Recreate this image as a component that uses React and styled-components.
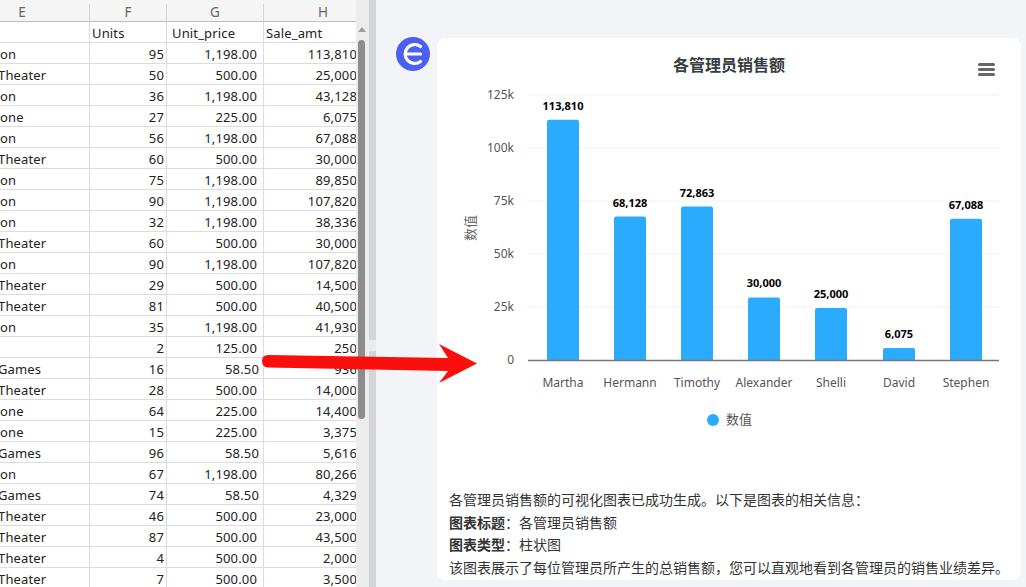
import React from 'react';
import styled, { createGlobalStyle } from 'styled-components';

const GlobalStyle = createGlobalStyle`
  html, body {
    margin: 0;
    padding: 0;
    background: #f3f4f8;
  }
`;

const Page = styled.div`
  position: relative;
  display: flex;
  width: 1026px;
  height: 587px;
  overflow: hidden;
  font-family: 'Noto Sans', 'Noto Sans CJK SC', sans-serif;
`;

const SheetPane = styled.div`
  display: flex;
  flex: 0 0 369px;
  background: #fff;
`;

const Sheet = styled.div`
  flex: 0 0 356px;
  overflow: hidden;
`;

const Row = styled.div`
  display: grid;
  grid-template-columns: 89px 77px 97px 95px;
  height: ${(p) => (p.$head ? 22 : 21)}px;
  box-sizing: border-box;
  border-bottom: 1px solid ${(p) => (p.$head ? '#bdbdbd' : '#dcdcdc')};
  background: ${(p) => (p.$head ? '#f5f5f5' : '#fff')};
  padding-top: ${(p) => (p.$head ? '4px' : '0')};
`;

const HeadCell = styled.div`
  box-sizing: border-box;
  border-left: ${(p) => (p.$first ? 'none' : '1px solid #d4d4d4')};
  padding: 0 ${(p) => p.$right || 0}px 0 ${(p) => p.$left || 0}px;
  color: #666;
  font-size: 13.5px;
  line-height: 17px;
  text-align: center;
`;

const Cell = styled.div`
  box-sizing: border-box;
  border-left: ${(p) => (p.$first ? 'none' : '1px solid #dcdcdc')};
  padding: 0 ${(p) => p.$pad ?? 2}px 0 ${(p) => (p.$first ? 0 : p.$lead || 2)}px;
  margin-left: ${(p) => (p.$first ? p.$shift || 0 : 0)}px;
  overflow: hidden;
  white-space: nowrap;
  color: #222;
  font-size: 13px;
  line-height: 23px;
  letter-spacing: 0.15px;
  text-align: ${(p) => (p.$num ? 'right' : 'left')};
`;

const Scrollbar = styled.div`
  position: relative;
  flex: 0 0 13px;
  background: #ececec;
`;

const ScrollArrow = styled.div`
  position: absolute;
  top: 27px;
  left: 2px;
  border-left: 4px solid transparent;
  border-right: 4px solid transparent;
  border-bottom: 5px solid #9a9a9a;
`;

const ScrollThumb = styled.div`
  position: absolute;
  top: 40px;
  left: 2px;
  width: 7px;
  height: 379px;
  border-radius: 4px;
  background: #8d8d8d;
`;

const Divider = styled.div`
  position: relative;
  flex: 0 0 7px;
  background: #d2d5da;
`;

const Grip = styled.div`
  position: absolute;
  top: 340px;
  left: 0;
  width: 7px;
  height: 11px;
  background: #e9ebee;
`;

const ChatPane = styled.div`
  display: flex;
  flex: 1;
  align-items: flex-start;
  gap: 7px;
  padding: 37px 5px 0 20px;
`;

const Avatar = styled.svg`
  flex: 0 0 34px;
  width: 34px;
  height: 34px;
`;

const Card = styled.div`
  flex: 1;
  height: 542px;
  margin-top: 1px;
  border-radius: 8px;
  background: #fff;
  overflow: hidden;
`;

const ChartSvg = styled.svg`
  display: block;
  width: 584px;
  height: 451px;
`;

const Notes = styled.div`
  padding-left: 12px;
  color: #333;
  font-size: 14px;
  line-height: 22.5px;
  white-space: nowrap;
`;

const Note = styled.div``;

const Strong = styled.strong`
  font-weight: 700;
`;

const ArrowOverlay = styled.svg`
  position: absolute;
  top: 340px;
  left: 258px;
  width: 224px;
  height: 46px;
`;

const columns = [
  { id: 'E', right: 45 },
  { id: 'F' },
  { id: 'G' },
  { id: 'H', left: 24 },
];

const rows = [
  ['on', 95, '1,198.00', '113,810'],
  ['Theater', 50, '500.00', '25,000'],
  ['on', 36, '1,198.00', '43,128'],
  ['one', 27, '225.00', '6,075'],
  ['on', 56, '1,198.00', '67,088'],
  ['Theater', 60, '500.00', '30,000'],
  ['on', 75, '1,198.00', '89,850'],
  ['on', 90, '1,198.00', '107,820'],
  ['on', 32, '1,198.00', '38,336'],
  ['Theater', 60, '500.00', '30,000'],
  ['on', 90, '1,198.00', '107,820'],
  ['Theater', 29, '500.00', '14,500'],
  ['Theater', 81, '500.00', '40,500'],
  ['on', 35, '1,198.00', '41,930'],
  ['', 2, '125.00', '250'],
  ['Games', 16, '58.50', '936'],
  ['Theater', 28, '500.00', '14,000'],
  ['one', 64, '225.00', '14,400'],
  ['one', 15, '225.00', '3,375'],
  ['Games', 96, '58.50', '5,616'],
  ['on', 67, '1,198.00', '80,266'],
  ['Games', 74, '58.50', '4,329'],
  ['Theater', 46, '500.00', '23,000'],
  ['Theater', 87, '500.00', '43,500'],
  ['Theater', 4, '500.00', '2,000'],
  ['Theater', 7, '500.00', '3,500'],
];

const bars = [
  { name: 'Martha', value: 113810, x: 563 },
  { name: 'Hermann', value: 68128, x: 630 },
  { name: 'Timothy', value: 72863, x: 697 },
  { name: 'Alexander', value: 30000, x: 764 },
  { name: 'Shelli', value: 25000, x: 831 },
  { name: 'David', value: 6075, x: 899 },
  { name: 'Stephen', value: 67088, x: 966 },
];

const ticks = [
  { label: '0', y: 360 },
  { label: '25k', y: 307 },
  { label: '50k', y: 254 },
  { label: '75k', y: 201 },
  { label: '100k', y: 148 },
  { label: '125k', y: 95 },
];

const BASE_Y = 361;
const PX_PER_UNIT = 265 / 125000;

const fontStack = "'Noto Sans', 'Noto Sans CJK SC', sans-serif";

const Chart = () => (
  <ChartSvg viewBox="437 38 584 451" fontFamily={fontStack}>
    <text x="729" y="71" textAnchor="middle" fontSize="16" fontWeight="700" fill="#373d3f">
      各管理员销售额
    </text>
    <rect x="978" y="63" width="17" height="3" rx="1.5" fill="#666" />
    <rect x="978" y="68" width="17" height="3" rx="1.5" fill="#666" />
    <rect x="978" y="73" width="17" height="3" rx="1.5" fill="#666" />
    {ticks.map((t) => (
      <g key={t.label}>
        {t.label !== '0' && <line x1="528" x2="999" y1={t.y} y2={t.y} stroke="#f0f1f3" />}
        <text x="514" y={t.y + 4} textAnchor="end" fontSize="12" fill="#555">
          {t.label}
        </text>
      </g>
    ))}
    <text
      transform="translate(475 228) rotate(-90)"
      textAnchor="middle"
      fontSize="13"
      fill="#666"
    >
      数值
    </text>
    {bars.map((b) => {
      const h = b.value * PX_PER_UNIT;
      const top = BASE_Y - h;
      return (
        <g key={b.name}>
          <path
            d={`M${b.x - 16} ${BASE_Y}V${top + 2}q0 -2 2 -2h28q2 0 2 2V${BASE_Y}z`}
            fill="#2aabfd"
          />
          <text
            x={b.x}
            y={top - 10}
            textAnchor="middle"
            fontSize="11"
            fontWeight="700"
            fill="#000"
          >
            {b.value.toLocaleString('en-US')}
          </text>
          <text x={b.x} y="387" textAnchor="middle" fontSize="12" fill="#555">
            {b.name}
          </text>
        </g>
      );
    })}
    <line x1="528" x2="999" y1="360.5" y2="360.5" stroke="#777" strokeWidth="1.5" />
    <circle cx="713" cy="420" r="6" fill="#2aabfd" />
    <text x="726" y="424" fontSize="13" fill="#555">
      数值
    </text>
  </ChartSvg>
);

const App = () => (
  <Page>
    <GlobalStyle />
    <SheetPane>
      <Sheet>
        <Row $head>
          {columns.map((c, i) => (
            <HeadCell key={c.id} $first={i === 0} $left={c.left} $right={c.right}>
              {c.id}
            </HeadCell>
          ))}
        </Row>
        <Row>
          <Cell $first />
          <Cell>Units</Cell>
          <Cell $lead={5}>Unit_price</Cell>
          <Cell>Sale_amt</Cell>
        </Row>
        {rows.map((r, i) => (
          <Row key={i}>
            <Cell $first $shift={r[0] === 'on' || r[0] === 'one' ? 0 : -2}>
              {r[0]}
            </Cell>
            <Cell $num>{r[1]}</Cell>
            <Cell $num $pad={r[2] === '58.50' ? 4 : 6}>
              {r[2]}
            </Cell>
            <Cell $num $pad={1}>
              {r[3]}
            </Cell>
          </Row>
        ))}
      </Sheet>
      <Scrollbar>
        <ScrollArrow />
        <ScrollThumb />
      </Scrollbar>
    </SheetPane>
    <Divider>
      <Grip />
    </Divider>
    <ChatPane>
      <Avatar viewBox="0 0 34 34">
        <circle cx="17" cy="17" r="17" fill="#4a60f2" />
        <path
          d="M24.5 9.5A9.5 9.5 0 1 0 24.5 24.5M9.5 17H24.5"
          fill="none"
          stroke="#fff"
          strokeWidth="3.2"
          strokeLinecap="round"
        />
      </Avatar>
      <Card>
        <Chart />
        <Notes>
          <Note>各管理员销售额的可视化图表已成功生成。以下是图表的相关信息&#xFF1A;</Note>
          <Note>
            <Strong>图表标题</Strong>&#xFF1A;各管理员销售额
          </Note>
          <Note>
            <Strong>图表类型</Strong>&#xFF1A;柱状图
          </Note>
          <Note>该图表展示了每位管理员所产生的总销售额&#xFF0C;您可以直观地看到各管理员的销售业绩差异。</Note>
        </Notes>
      </Card>
    </ChatPane>
    <ArrowOverlay viewBox="258 340 224 46">
      <path
        d="M268 355L448 358L439 344L477 363.5L439 383L448 371L268 367.5Q262 367 262 361Q262 355 268 355Z"
        fill="#fb0f0c"
      />
    </ArrowOverlay>
  </Page>
);

export default App;
